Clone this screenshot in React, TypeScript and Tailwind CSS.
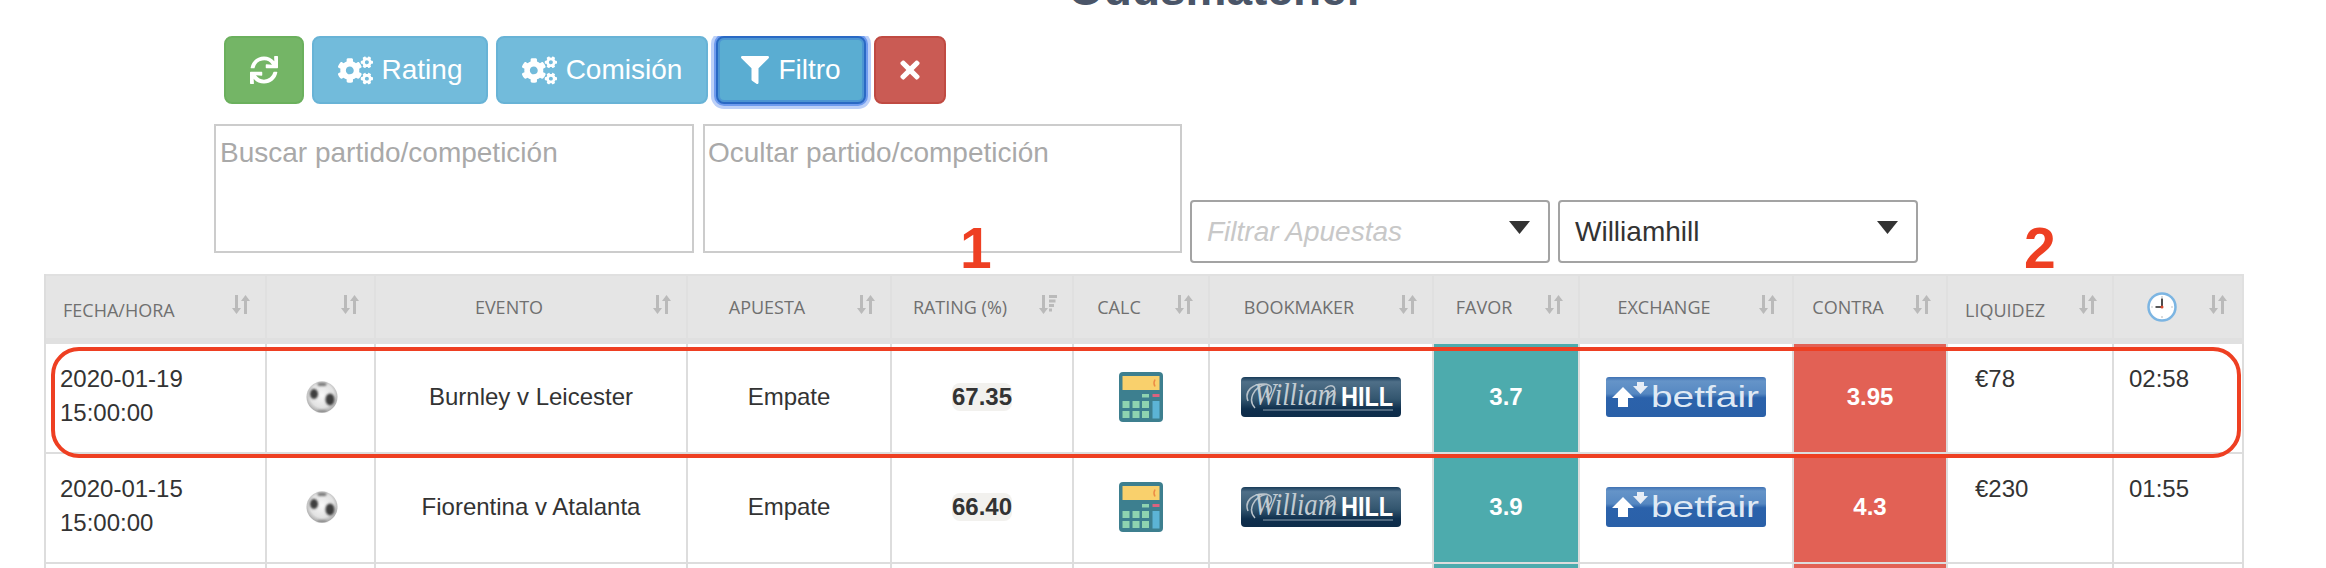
import { FaCogs, FaFilter, FaSync, FaTimes } from "react-icons/fa";

const SortIcon = ({ active = false }: { active?: boolean }) => (
  <svg width="18" height="19" viewBox="0 0 18 19" fill="#bababa" className="absolute right-[15px] top-[19px]">
    <path d="M3 0h3v13h3l-4.500 6L0 13h3z" />
    {active ? (
      <path d="M10 0h8v3h-8zM10 4.500h6.500v3H10zM10 9h5v3h-5zM10 13.500h3v3h-3z" />
    ) : (
      <path d="M12 19h3V6h3l-4.500-6L9 6h3z" />
    )}
  </svg>
);

const ClockIcon = () => (
  <svg width="30" height="30" viewBox="0 0 30 30" className="inline-block">
    <circle cx="15" cy="15" r="13.500" fill="#fff" stroke="#7cb5e2" strokeWidth="2.500" />
    <path d="M15 4v2M15 24v2M4 15h2M24 15h2" stroke="#c4c4c4" strokeWidth="1.200" />
    <path d="M15 6.500V15H8.500" fill="none" stroke="#222" strokeWidth="1.600" />
    <circle cx="15" cy="15" r="1.500" fill="#d9472b" />
  </svg>
);

const BallIcon = () => (
  <svg width="32" height="32" viewBox="0 0 32 32" className="mx-auto block">
    <defs>
      <radialGradient id="ball" cx="50%" cy="45%" r="55%">
        <stop offset="0%" stopColor="#f8f8f8" />
        <stop offset="70%" stopColor="#e2e2e2" />
        <stop offset="100%" stopColor="#a8a8a8" />
      </radialGradient>
      <filter id="soft">
        <feGaussianBlur stdDeviation="0.8" />
      </filter>
    </defs>
    <circle cx="16" cy="16" r="15.500" fill="url(#ball)" />
    <g fill="#3c3c3c" filter="url(#soft)">
      <ellipse cx="8" cy="13" rx="4" ry="5" />
      <ellipse cx="24" cy="18.500" rx="4.500" ry="6" />
      <path d="M11 2.500q5-2 10 0l-1.500 2.500h-7zM12 29.500h8l1 1q-5 1.500-10 0z" fill="#777" />
    </g>
  </svg>
);

const CalcIcon = () => (
  <svg width="44" height="50" viewBox="0 0 44 50" className="mx-auto block">
    <rect width="44" height="50" rx="4" fill="#3d7f8f" />
    <rect x="3.500" y="4" width="37" height="14" fill="#f9d06c" />
    <path d="M36 7.500q-2 3.500 0 7" fill="none" stroke="#ec8a45" strokeWidth="1.500" />
    <rect x="23" y="22" width="7" height="3.500" fill="#8fd3b0" />
    <rect x="33.500" y="22" width="7" height="3" fill="#d9637f" />
    <g fill="#8fd3b0">
      <rect x="3.500" y="29" width="7" height="7" />
      <rect x="13.500" y="29" width="7" height="7" />
      <rect x="23" y="29" width="7" height="7" />
      <rect x="3.500" y="39" width="7" height="7" />
      <rect x="13.500" y="39" width="7" height="7" />
      <rect x="23" y="39" width="7" height="7" />
    </g>
    <rect x="33.500" y="29" width="7" height="17.500" fill="#5cb4d6" />
  </svg>
);

const WilliamHillLogo = () => (
  <svg width="160" height="40" viewBox="0 0 160 40" className="mx-auto block">
    <defs>
      <linearGradient id="wh" x1="0" y1="0" x2="0" y2="1">
        <stop offset="0%" stopColor="#173a58" />
        <stop offset="12%" stopColor="#4f6f88" />
        <stop offset="55%" stopColor="#33566f" />
        <stop offset="80%" stopColor="#0f2f4d" />
        <stop offset="100%" stopColor="#0e2c49" />
      </linearGradient>
    </defs>
    <rect width="160" height="40" rx="4" fill="url(#wh)" />
    <path d="M7 24C3 14 12 6 24 7c9 1 8 9 1 13M14 31C7 24 11 10 26 7M84 12c5-6 12-3 9 3-1 3-4 5-6 6" fill="none" stroke="#b8c2ca" strokeWidth="1.500" />
    <text transform="translate(13 28) scale(0.86 1)" fontFamily="'Liberation Serif', serif" fontStyle="italic" fontSize="31" fill="#c3ccd2">
      William
    </text>
    <text transform="translate(100 29) scale(0.84 1)" fontFamily="'Liberation Sans', sans-serif" fontWeight="700" fontSize="28" fill="#fff">
      HILL
    </text>
    <path d="M22 33h130" stroke="#8fa2b1" strokeWidth="1" />
  </svg>
);

const BetfairLogo = () => (
  <svg width="160" height="40" viewBox="0 0 160 40" className="mx-auto block">
    <defs>
      <linearGradient id="bf" x1="0" y1="0" x2="0" y2="1">
        <stop offset="0%" stopColor="#3f72b4" />
        <stop offset="10%" stopColor="#6594c8" />
        <stop offset="42%" stopColor="#5688c2" />
        <stop offset="52%" stopColor="#2b62ab" />
        <stop offset="100%" stopColor="#2a60a8" />
      </linearGradient>
    </defs>
    <rect width="160" height="40" rx="3" fill="url(#bf)" />
    <path d="M6 21 17 10l11 11h-6v9H12v-9z" fill="#fff" />
    <path d="M27 9h4V5h7v4h4l-7.500 8z" fill="#e8eef6" />
    <text x="45" y="30" fontFamily="'Liberation Sans', sans-serif" fontSize="30" fill="#dfe9f4" textLength="108" lengthAdjust="spacingAndGlyphs">
      betfair
    </text>
  </svg>
);

const columns = [
  { w: "w-[221px]", label: "Fecha/Hora", head: "pl-[17px] pt-[6px] text-left" },
  { w: "w-[109px]", label: "", head: "" },
  { w: "w-[312px]", label: "Evento", head: "pr-[44px] text-center" },
  { w: "w-[204px]", label: "Apuesta", head: "pr-[44px] text-center" },
  { w: "w-[182px]", label: "Rating (%)", head: "pr-[44px] text-center", active: true },
  { w: "w-[136px]", label: "Calc", head: "pr-[44px] text-center" },
  { w: "w-[224px]", label: "Bookmaker", head: "pr-[44px] text-center" },
  { w: "w-[146px]", label: "Favor", head: "pr-[44px] text-center" },
  { w: "w-[214px]", label: "Exchange", head: "pr-[44px] text-center" },
  { w: "w-[154px]", label: "Contra", head: "pr-[44px] text-center" },
  { w: "w-[166px]", label: "Liquidez", head: "pl-[17px] pt-[6px] text-left" },
  { w: "w-[130px]", label: "", head: "pr-[32px] text-center", clock: true },
];

const rows = [
  { date: "2020-01-19", time: "15:00:00", event: "Burnley v Leicester", bet: "Empate", rating: "67.35", favor: "3.7", contra: "3.95", liq: "€78", left: "02:58" },
  { date: "2020-01-15", time: "15:00:00", event: "Fiorentina v Atalanta", bet: "Empate", rating: "66.40", favor: "3.9", contra: "4.3", liq: "€230", left: "01:55" },
];

const cell = "border-r-2 border-b-2 border-[#dddddd] align-middle text-center pb-[2px]";
const topCell = "border-r-2 border-b-2 border-[#dddddd] align-top pt-[18px]";

const App = () => {
  return (
    <div className="relative h-[568px] overflow-hidden bg-white font-['Liberation_Sans',sans-serif] text-[#333333]">
      <h1 className="-mt-[38px] mb-[19px] ml-[1068px] h-[55px] text-[46px] leading-[55px] font-bold text-[#4a5568]">
        Oddsmatcher
      </h1>

      <div className="ml-[224px] flex gap-2 text-[28px] text-white">
        <button className="flex h-[68px] w-[80px] items-center justify-center rounded-[8px] border-2 border-[#6bb05d] bg-[#74b566]">
          <FaSync size={28} />
        </button>
        <button className="flex h-[68px] w-[176px] items-center justify-center gap-[9px] rounded-[8px] border-2 border-[#68b3d6] bg-[#72bbdb]">
          <FaCogs size={35} /> Rating
        </button>
        <button className="flex h-[68px] w-[212px] items-center justify-center gap-[9px] rounded-[8px] border-2 border-[#68b3d6] bg-[#72bbdb]">
          <FaCogs size={35} /> Comisión
        </button>
        <button className="flex h-[68px] w-[150px] items-center justify-center gap-[9px] rounded-[8px] border-2 border-[#2a69c4] bg-[#5aadd2] shadow-[inset_0_0_0_2px_#4c95d2,0_0_0_2px_#6f9bee,0_0_0_5px_#bcd0f8] [clip-path:inset(0_-10px_-10px_-10px)]">
          <FaFilter size={28} /> Filtro
        </button>
        <button className="flex h-[68px] w-[72px] items-center justify-center rounded-[8px] border-2 border-[#c04a42] bg-[#ca5b54]">
          <FaTimes size={28} />
        </button>
      </div>

      <div className="mt-[20px] ml-[214px] flex items-end">
        <div className="mb-[10px] h-[129px] w-[480px] border-2 border-[#cccccc] px-1 pt-[6px] text-[28px] text-[#a9a9a9]">
          Buscar partido/competición
        </div>
        <div className="mb-[10px] ml-[9px] h-[129px] w-[479px] border-2 border-[#cccccc] pt-[6px] pr-1 pl-[3px] text-[28px] text-[#a9a9a9]">
          Ocultar partido/competición
        </div>
        <div className="ml-[8px] flex h-[63px] w-[360px] items-center justify-between rounded-[4px] border-2 border-[#a3a3a3] pr-[18px] pl-[15px] text-[28px] text-[#c8c8c8] italic">
          Filtrar Apuestas
          <svg width="21" height="13" viewBox="0 0 21 13" className="-mt-[8px]"><path d="M0 0h21L10.500 13z" fill="#333" /></svg>
        </div>
        <div className="ml-[8px] flex h-[63px] w-[360px] items-center justify-between rounded-[4px] border-2 border-[#a3a3a3] pr-[18px] pl-[15px] text-[28px] text-[#333333]">
          Williamhill
          <svg width="21" height="13" viewBox="0 0 21 13" className="-mt-[8px]"><path d="M0 0h21L10.500 13z" fill="#333" /></svg>
        </div>
      </div>

      <table className="mt-[11px] ml-[44px] w-[2198px] table-fixed border-separate border-spacing-0 border-l-2 border-[#dddddd] text-[24px]">
        <colgroup>
          {columns.map((c, i) => (
            <col key={i} className={c.w} />
          ))}
        </colgroup>
        <thead>
          <tr className="h-[70px] bg-[#e5e5e5] font-['Open_Sans',sans-serif] text-[18px] text-[#707070] uppercase">
            {columns.map((c, i) => (
              <th key={i} className={`relative border-t-2 border-r-2 border-b-[6px] border-[#e0e0e0] font-normal ${c.head}`}>
                {c.clock ? <ClockIcon /> : c.label}
                <SortIcon active={c.active} />
              </th>
            ))}
          </tr>
        </thead>
        <tbody>
          {rows.map((r) => (
            <tr key={r.date} className="h-[110px]">
              <td className={`${topCell} pl-[14px] leading-[34px]`}>
                {r.date}
                <br />
                {r.time}
              </td>
              <td className={`${cell} pl-[2px]`}><BallIcon /></td>
              <td className={cell}>{r.event}</td>
              <td className={cell}>{r.bet}</td>
              <td className={cell}>
                <span className="inline-block rounded-[8px] bg-[#f2f1ee] leading-[28px] font-bold">{r.rating}</span>
              </td>
              <td className={cell}><CalcIcon /></td>
              <td className={cell}><WilliamHillLogo /></td>
              <td className={`${cell} bg-[#4dabad] font-bold text-white`}>{r.favor}</td>
              <td className={cell}><BetfairLogo /></td>
              <td className={`${cell} bg-[#e26155] font-bold text-white`}>{r.contra}</td>
              <td className={`${topCell} pl-[27px] leading-[34px]`}>{r.liq}</td>
              <td className={`${topCell} pl-[15px] leading-[34px]`}>{r.left}</td>
            </tr>
          ))}
          <tr className="h-[110px]">
            {columns.map((c, i) => (
              <td key={i} className={`border-r-2 border-[#dddddd] ${c.label === "Favor" ? "bg-[#4dabad]" : c.label === "Contra" ? "bg-[#e26155]" : ""}`} />
            ))}
          </tr>
        </tbody>
      </table>

      {/* hand-drawn annotations on top of the table */}
      <div className="pointer-events-none absolute top-[347px] left-[51px] h-[111px] w-[2190px] rounded-[28px] border-4 border-[#ee3f22]" />
      <span className="absolute top-[215px] left-[960px] text-[57px] leading-[66px] font-bold text-[#ee3f22]">1</span>
      <span className="absolute top-[215px] left-[2024px] text-[57px] leading-[66px] font-bold text-[#ee3f22]">2</span>
    </div>
  );
};

export default App;
